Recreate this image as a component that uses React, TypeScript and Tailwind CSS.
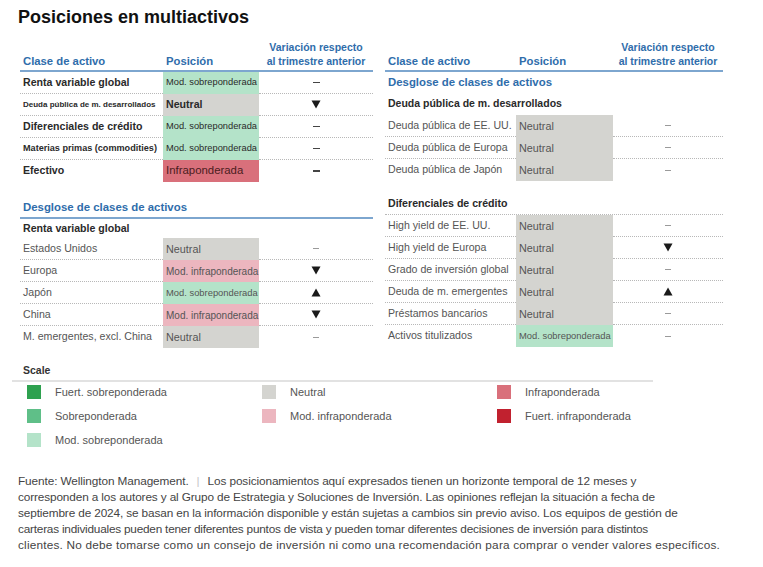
import React from 'react';

type Pos = 'modSobre' | 'neutral' | 'modInfra' | 'infra';
type Change = 'flat' | 'down' | 'up';

interface Row {
  label: string;
  pos: Pos;
  change: Change;
}

const posLabel: Record<Pos, string> = {
  modSobre: 'Mod. sobreponderada',
  neutral: 'Neutral',
  modInfra: 'Mod. infraponderada',
  infra: 'Infraponderada',
};

const posBg: Record<Pos, string> = {
  modSobre: 'bg-[#b4e3c9]',
  neutral: 'bg-[#d4d4d0]',
  modInfra: 'bg-[#ecb6bf]',
  infra: 'bg-[#d9707b]',
};

// font size of the position text in the detail tables
const posSize: Record<Pos, string> = {
  modSobre: 'text-[9.4px]',
  neutral: 'text-[10.8px]',
  modInfra: 'text-[10px]',
  infra: 'text-[10.8px]',
};

// Top summary table (left)
const summary: { label: string; size: string; pos: Pos; change: Change }[] = [
  { label: 'Renta variable global', size: 'text-[10.6px]', pos: 'modSobre', change: 'flat' },
  { label: 'Deuda pública de m. desarrollados', size: 'text-[8px]', pos: 'neutral', change: 'down' },
  { label: 'Diferenciales de crédito', size: 'text-[10.6px]', pos: 'modSobre', change: 'flat' },
  { label: 'Materias primas (commodities)', size: 'text-[9.1px]', pos: 'modSobre', change: 'flat' },
  { label: 'Efectivo', size: 'text-[10.6px]', pos: 'infra', change: 'flat' },
];

const equity: Row[] = [
  { label: 'Estados Unidos', pos: 'neutral', change: 'flat' },
  { label: 'Europa', pos: 'modInfra', change: 'down' },
  { label: 'Japón', pos: 'modSobre', change: 'up' },
  { label: 'China', pos: 'modInfra', change: 'down' },
  { label: 'M. emergentes, excl. China', pos: 'neutral', change: 'flat' },
];

const govDebt: Row[] = [
  { label: 'Deuda pública de EE. UU.', pos: 'neutral', change: 'flat' },
  { label: 'Deuda pública de Europa', pos: 'neutral', change: 'flat' },
  { label: 'Deuda pública de Japón', pos: 'neutral', change: 'flat' },
];

const credit: Row[] = [
  { label: 'High yield de EE. UU.', pos: 'neutral', change: 'flat' },
  { label: 'High yield de Europa', pos: 'neutral', change: 'down' },
  { label: 'Grado de inversión global', pos: 'neutral', change: 'flat' },
  { label: 'Deuda de m. emergentes', pos: 'neutral', change: 'up' },
  { label: 'Préstamos bancarios', pos: 'neutral', change: 'flat' },
  { label: 'Activos titulizados', pos: 'modSobre', change: 'flat' },
];

const scale = [
  [
    { color: 'bg-[#2ea14f]', label: 'Fuert. sobreponderada' },
    { color: 'bg-[#5fbf88]', label: 'Sobreponderada' },
    { color: 'bg-[#b4e3c9]', label: 'Mod. sobreponderada' },
  ],
  [
    { color: 'bg-[#d4d4d0]', label: 'Neutral' },
    { color: 'bg-[#ecb6bf]', label: 'Mod. infraponderada' },
  ],
  [
    { color: 'bg-[#d9707b]', label: 'Infraponderada' },
    { color: 'bg-[#c1212f]', label: 'Fuert. infraponderada' },
  ],
];

function ChangeMark({ change, dark }: { change: Change; dark?: boolean }) {
  if (change === 'down') {
    return (
      <svg width="10" height="9" viewBox="0 0 10 9">
        <path d="M0.5 0.5 L9.5 0.5 L5 8.5 Z" fill="#1a1a1a" />
      </svg>
    );
  }
  if (change === 'up') {
    return (
      <svg width="10" height="9" viewBox="0 0 10 9">
        <path d="M5 0.5 L9.5 8.5 L0.5 8.5 Z" fill="#1a1a1a" />
      </svg>
    );
  }
  return <div className={dark ? 'w-[7px] h-[1.5px] bg-[#444]' : 'w-[6px] h-px bg-[#9a9a9a]'} />;
}

function Header({ cols }: { cols: string }) {
  return (
    <div className={`grid ${cols} h-[32px] items-end pb-[3px] border-b-2 border-[#7da6cf] text-[#2f6dab] font-bold text-[11.3px] leading-[14px]`}>
      <div className="pl-[3px]">Clase de activo</div>
      <div className="pl-[3px]">Posición</div>
      <div className="text-center text-[10.5px]">
        Variación respecto
        <br />
        al trimestre anterior
      </div>
    </div>
  );
}

function DetailRows({ rows, cols }: { rows: Row[]; cols: string }) {
  return (
    <div>
      {rows.map((r, i) => {
        const last = i === rows.length - 1;
        const sep = last ? '' : 'border-b border-dotted border-[#b8b8b8]';
        return (
          <div key={r.label} className={`grid ${cols} h-[22px]`}>
            <div className={`flex items-center pl-[3px] text-[10.6px] text-[#555] whitespace-nowrap ${sep}`}>{r.label}</div>
            <div className={`flex items-center pl-[3px] text-[#555] whitespace-nowrap ${posSize[r.pos]} ${posBg[r.pos]}`}>
              {posLabel[r.pos]}
            </div>
            <div className={`flex items-center justify-center ${sep}`}>
              <ChangeMark change={r.change} />
            </div>
          </div>
        );
      })}
    </div>
  );
}

export default function App() {
  const leftCols = 'grid-cols-[143px_96px_114px]';
  const rightCols = 'grid-cols-[131px_97px_110px]';

  return (
    <div className="w-[763px] h-[567px] bg-white overflow-hidden font-['Liberation_Sans',Arial,sans-serif] text-[#222]">
      <h1 className="pl-[18px] pt-[7px] text-[18px] leading-[20px] font-bold text-[#111]">Posiciones en multiactivos</h1>

      <div className="flex pl-[20px] gap-[12px] mt-[13px]">
        {/* Left column */}
        <div className="w-[353px]">
          <Header cols={leftCols} />
          {summary.map((r, i) => {
            const last = i === summary.length - 1;
            const sep = last ? '' : 'border-b border-dotted border-[#b8b8b8]';
            return (
              <div key={r.label} className={`grid ${leftCols} h-[22px]`}>
                <div className={`flex items-center pl-[3px] font-bold text-[#2a2a2a] whitespace-nowrap ${r.size} ${sep}`}>
                  {r.label}
                </div>
                <div
                  className={`flex items-center pl-[3px] whitespace-nowrap ${posBg[r.pos]} ${
                    r.pos === 'modSobre'
                      ? 'text-[9.3px] text-[#2a2a2a]'
                      : r.pos === 'infra'
                      ? 'text-[11.4px] text-[#4a1c20]'
                      : 'text-[10.6px] font-bold text-[#2a2a2a]'
                  }`}
                >
                  {posLabel[r.pos]}
                </div>
                <div className={`flex items-center justify-center ${sep}`}>
                  <ChangeMark change={r.change} dark />
                </div>
              </div>
            );
          })}

          <div className="mt-[17px] h-[20px] flex items-center pl-[3px] border-b-2 border-[#7da6cf] text-[#2f6dab] font-bold text-[11.4px]">
            Desglose de clases de activos
          </div>
          <div className="h-[19px] flex items-center pl-[3px] font-bold text-[10.6px] text-[#2a2a2a]">Renta variable global</div>
          <DetailRows rows={equity} cols={leftCols} />
        </div>

        {/* Right column */}
        <div className="w-[338px]">
          <Header cols={rightCols} />
          <div className="h-[21px] flex items-center pl-[3px] text-[#2f6dab] font-bold text-[11.4px]">
            Desglose de clases de activos
          </div>
          <div className="h-[22px] flex items-center pl-[3px] font-bold text-[10.5px] text-[#2a2a2a]">
            Deuda pública de m. desarrollados
          </div>
          <DetailRows rows={govDebt} cols={rightCols} />

          <div className="mt-[13px] h-[21px] flex items-center pl-[3px] font-bold text-[10.6px] text-[#2a2a2a] border-b border-dotted border-[#b8b8b8]">
            Diferenciales de crédito
          </div>
          <DetailRows rows={credit} cols={rightCols} />
        </div>
      </div>

      {/* Scale */}
      <div className="ml-[12px] w-[641px] mt-[14px]">
        <div className="h-[20px] flex items-center pl-[11px] border-b-2 border-[#e2e2e2] font-bold text-[10.5px] text-[#333]">
          Scale
        </div>
        <div className="grid grid-cols-[235px_235px_171px]">
          {scale.map((col, ci) => (
            <div key={ci} className="pl-[15px]">
              {col.map((s) => (
                <div key={s.label} className="h-[24px] pt-[3px]">
                  <div className="flex items-center h-[14px] gap-[14px]">
                    <div className={`w-[14px] h-[14px] ${s.color}`} />
                    <span className="text-[11px] text-[#555] whitespace-nowrap">{s.label}</span>
                  </div>
                </div>
              ))}
            </div>
          ))}
        </div>
      </div>

      {/* Footer */}
      <div className="pl-[18px] mt-[19px] text-[11.8px] leading-[16px] text-[#444] whitespace-nowrap">
        <div className="tracking-[-0.1px]">
          Fuente: Wellington Management.<span className="text-[#c8c8c8] px-[8px]">|</span>Los posicionamientos aquí expresados tienen un
          horizonte temporal de 12 meses y
        </div>
        <div className="tracking-[-0.13px]">
          corresponden a los autores y al Grupo de Estrategia y Soluciones de Inversión. Las opiniones reflejan la situación a fecha de
        </div>
        <div className="tracking-[-0.13px]">
          septiembre de 2024, se basan en la información disponible y están sujetas a cambios sin previo aviso. Los equipos de gestión de
        </div>
        <div className="tracking-[-0.22px]">
          carteras individuales pueden tener diferentes puntos de vista y pueden tomar diferentes decisiones de inversión para distintos
        </div>
        <div className="tracking-[0.2px]">
          clientes. No debe tomarse como un consejo de inversión ni como una recomendación para comprar o vender valores específicos.
        </div>
      </div>
    </div>
  );
}
